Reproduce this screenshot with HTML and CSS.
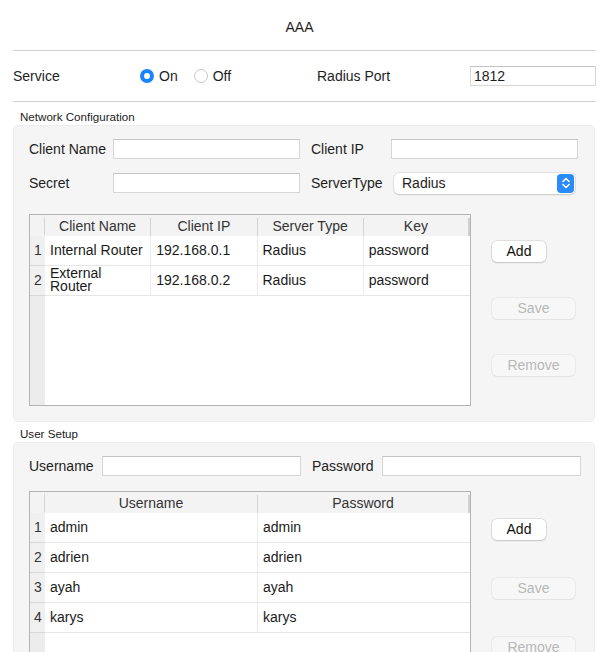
FILE: index.html
```html
<!DOCTYPE html>
<html>
<head>
<meta charset="utf-8">
<link rel="stylesheet" href="styles.css">
</head>
<body>
<div class="page">
  <div class="title">AAA</div>
  <div class="service-row">
    <span class="lbl service-lbl">Service</span>
    <span class="radios">
      <span class="radio on"></span><span class="radio-text">On</span>
      <span class="radio off"></span><span class="radio-text">Off</span>
    </span>
    <span class="lbl port-lbl">Radius Port</span>
    <span class="input port-input">1812</span>
  </div>

  <div class="group-title">Network Configuration</div>
  <div class="group net-group">
    <div class="form net-form">
      <span class="lbl">Client Name</span>
      <span class="input"></span>
      <span class="lbl">Client IP</span>
      <span class="input"></span>
      <span class="lbl">Secret</span>
      <span class="input"></span>
      <span class="lbl">ServerType</span>
      <span class="select">Radius<span class="stepper"><svg width="10" height="14" viewBox="0 0 10 14"><path d="M2 5.5 L5 2.5 L8 5.5 M2 8.5 L5 11.5 L8 8.5" fill="none" stroke="#fff" stroke-width="1.6" stroke-linecap="round" stroke-linejoin="round"/></svg></span></span>
    </div>
    <div class="table-area">
      <div class="tbl net-tbl">
        <div class="tr head">
          <div class="rh"></div>
          <div class="th">Client Name</div>
          <div class="th">Client IP</div>
          <div class="th">Server Type</div>
          <div class="th last">Key</div>
        </div>
        <div class="tr">
          <div class="rh">1</div>
          <div class="td">Internal Router</div>
          <div class="td">192.168.0.1</div>
          <div class="td">Radius</div>
          <div class="td last">password</div>
        </div>
        <div class="tr">
          <div class="rh">2</div>
          <div class="td wrap">External Router</div>
          <div class="td">192.168.0.2</div>
          <div class="td">Radius</div>
          <div class="td last">password</div>
        </div>
        <div class="tr filler"><div class="rh"></div><div class="fill"></div></div>
      </div>
      <div class="buttons net-buttons">
        <span class="btn add">Add</span>
        <span class="btn dis">Save</span>
        <span class="btn dis">Remove</span>
      </div>
    </div>
  </div>

  <div class="group-title user-title">User Setup</div>
  <div class="group user-group">
    <div class="form user-form">
      <span class="lbl">Username</span>
      <span class="input"></span>
      <span class="lbl">Password</span>
      <span class="input"></span>
    </div>
    <div class="table-area user-area">
      <div class="tbl user-tbl">
        <div class="tr head">
          <div class="rh"></div>
          <div class="th">Username</div>
          <div class="th last">Password</div>
        </div>
        <div class="tr"><div class="rh">1</div><div class="td">admin</div><div class="td last">admin</div></div>
        <div class="tr"><div class="rh">2</div><div class="td">adrien</div><div class="td last">adrien</div></div>
        <div class="tr"><div class="rh">3</div><div class="td">ayah</div><div class="td last">ayah</div></div>
        <div class="tr"><div class="rh">4</div><div class="td">karys</div><div class="td last">karys</div></div>
        <div class="tr filler"><div class="rh"></div><div class="fill"></div></div>
      </div>
      <div class="buttons user-buttons">
        <span class="btn add">Add</span>
        <span class="btn dis">Save</span>
        <span class="btn dis">Remove</span>
      </div>
    </div>
  </div>
</div>
</body>
</html>
```

FILE: styles.css
```css
html, body {
  margin: 0;
  padding: 0;
  background: #ffffff;
  height: 652px;
  overflow: hidden;
}
body {
  font-family: "Liberation Sans", Arial, sans-serif;
  font-size: 14px;
  color: #1e1e1e;
}
.page {
  width: 606px;
}
.title {
  height: 51px;
  margin: 0 10px 0 13px;
  border-bottom: 1px solid #d2d2d2;
  box-sizing: border-box;
  padding: 19px 10px 0 0;
  line-height: 16px;
  text-align: center;
  font-size: 14px;
}
.service-row {
  height: 51px;
  margin: 0 10px 0 13px;
  border-bottom: 1px solid #d2d2d2;
  box-sizing: border-box;
  display: flex;
  align-items: center;
  padding-bottom: 1px;
}
.lbl {
  font-size: 14px;
  line-height: 16px;
  color: #1e1e1e;
  white-space: nowrap;
}
.service-lbl {
  width: 127px;
}
.radios {
  display: flex;
  align-items: center;
  width: 177px;
}
.radio {
  width: 14px;
  height: 14px;
  border-radius: 50%;
  box-sizing: border-box;
  display: inline-block;
}
.radio.on {
  background: #1b84fb;
  border: 4px solid #1b84fb;
  position: relative;
}
.radio.on::after {
  content: "";
  position: absolute;
  left: 0px;
  top: 0px;
  width: 6px;
  height: 6px;
  border-radius: 50%;
  background: #ffffff;
}
.radio.off {
  background: #ffffff;
  border: 1px solid #c8c8c8;
}
.radio-text {
  margin-left: 5px;
  margin-right: 16px;
}
.radio-text:last-child {
  margin-right: 0;
}
.port-lbl {
  width: 153px;
}
.input {
  display: inline-block;
  box-sizing: border-box;
  height: 20px;
  background: #ffffff;
  border: 1px solid #d6d6d6;
  border-top-color: #c4c4c4;
  line-height: 18px;
  padding-left: 3px;
  font-size: 14px;
}
.port-input {
  width: 126px;
}
.group-title {
  height: 23px;
  box-sizing: border-box;
  padding: 8px 0 0 20px;
  font-size: 11.6px;
  line-height: 14px;
  color: #222;
}
.group {
  margin: 0 11px 0 13px;
  background: #f5f5f5;
  border: 1px solid #ececec;
  border-radius: 5px;
  box-sizing: border-box;
  padding: 13px 0 0 15px;
}
.net-group {
  height: 297px;
}
.user-title {
  height: 20px;
  padding-top: 5px;
}
.user-group {
  height: 240px;
  border-bottom: none;
  border-radius: 5px 5px 0 0;
}
.form {
  display: grid;
  align-items: center;
}
.net-form {
  grid-template-columns: 84px 187px 11px 80px 187px;
  grid-template-rows: 20px 20px;
  row-gap: 14px;
}
.net-form > :nth-child(1), .net-form > :nth-child(5) { grid-column: 1; }
.net-form > :nth-child(2), .net-form > :nth-child(6) { grid-column: 2; }
.net-form > :nth-child(3), .net-form > :nth-child(7) { grid-column: 4; }
.net-form > :nth-child(4), .net-form > :nth-child(8) { grid-column: 5; }
.select {
  position: relative;
  box-sizing: border-box;
  height: 21px;
  width: 181px;
  margin-left: 3px;
  background: #ffffff;
  border-radius: 5px;
  box-shadow: 0 0 0 0.5px #d0d0d0, 0 1px 1.5px rgba(0,0,0,0.18);
  padding-left: 8px;
  line-height: 20px;
  font-size: 14px;
}
.stepper {
  position: absolute;
  right: 1px;
  top: 1px;
  width: 17px;
  height: 19px;
  border-radius: 4px;
  background: #2a8bfa;
  display: flex;
  align-items: center;
  justify-content: center;
}
.table-area {
  display: flex;
  margin-top: 21px;
}
.tbl {
  width: 442px;
  box-sizing: border-box;
  border: 1px solid #b4b4b4;
  background: #ffffff;
  display: flex;
  flex-direction: column;
}
.net-tbl {
  height: 192px;
}
.tr {
  display: flex;
  height: 30px;
  flex: none;
}
.tr.head {
  height: 21px;
  background: #f3f3f3;
}
.rh {
  width: 15px;
  flex: none;
  background: #f0f0f0;
  color: #333;
  text-align: center;
  font-size: 14px;
  line-height: 29px;
  border-bottom: 1px solid #d8d8d8;
  box-sizing: border-box;
  padding-left: 1px;
}
.head .rh {
  background: #f3f3f3;
  border-right: 1px solid #d4d4d4;
  border-bottom: 1px solid #f3f3f3;
  height: 21px;
  border-top: 4px solid #f3f3f3;
}
.th {
  text-align: center;
  font-size: 14px;
  color: #333;
  border-right: 1px solid #d4d4d4;
  box-sizing: border-box;
  margin: 3px 0 0 0;
  line-height: 17px;
  height: 18px;
}
.th.last {
  border-right: 2px solid #d0d0d0;
}
.td {
  padding-left: 5px;
  font-size: 14px;
  line-height: 29px;
  color: #1a1a1a;
  border-right: 1px solid #ececec;
  border-bottom: 1px solid #e6e6e6;
  box-sizing: border-box;
  white-space: nowrap;
  overflow: hidden;
}
.td.last {
  border-right: none;
}
.td.wrap {
  white-space: normal;
  line-height: 13px;
  padding-top: 1px;
  padding-right: 30px;
}
.net-tbl .td, .net-tbl .th {
  width: 106.25px;
  flex: none;
}
.tr.filler {
  flex: 1;
}
.tr.filler .rh {
  border-bottom: none;
  background: #ececec;
}
.fill {
  flex: 1;
  background: #ffffff;
}
.buttons {
  display: flex;
  flex-direction: column;
  align-items: flex-start;
  margin-left: 21px;
}
.net-buttons {
  padding-top: 27px;
  gap: 36px;
}
.btn {
  box-sizing: border-box;
  height: 21px;
  line-height: 21px;
  border-radius: 5px;
  text-align: center;
  font-size: 14px;
}
.btn.add {
  width: 54px;
  background: #ffffff;
  color: #111;
  box-shadow: 0 0 0 0.5px #c8c8c8, 0 1px 1.5px rgba(0,0,0,0.2);
}
.btn.dis {
  width: 83px;
  background: #f7f7f7;
  color: #b8b8b8;
  box-shadow: 0 0 0 0.5px #dedede, 0 1px 1px rgba(0,0,0,0.06);
}
.user-form {
  grid-template-columns: 73px 199px 11px 70px 199px;
  grid-template-rows: 20px;
}
.user-form > :nth-child(3) { grid-column: 4; }
.user-form > :nth-child(4) { grid-column: 5; }
.user-area {
  margin-top: 15px;
}
.user-tbl {
  height: 200px;
  border-bottom: none;
}
.user-tbl .th, .user-tbl .td {
  width: 213px;
  flex: none;
}
.user-tbl .th.last, .user-tbl .td.last {
  flex: 1;
  width: auto;
}
.user-buttons {
  padding-top: 28px;
  gap: 38px;
}
```
